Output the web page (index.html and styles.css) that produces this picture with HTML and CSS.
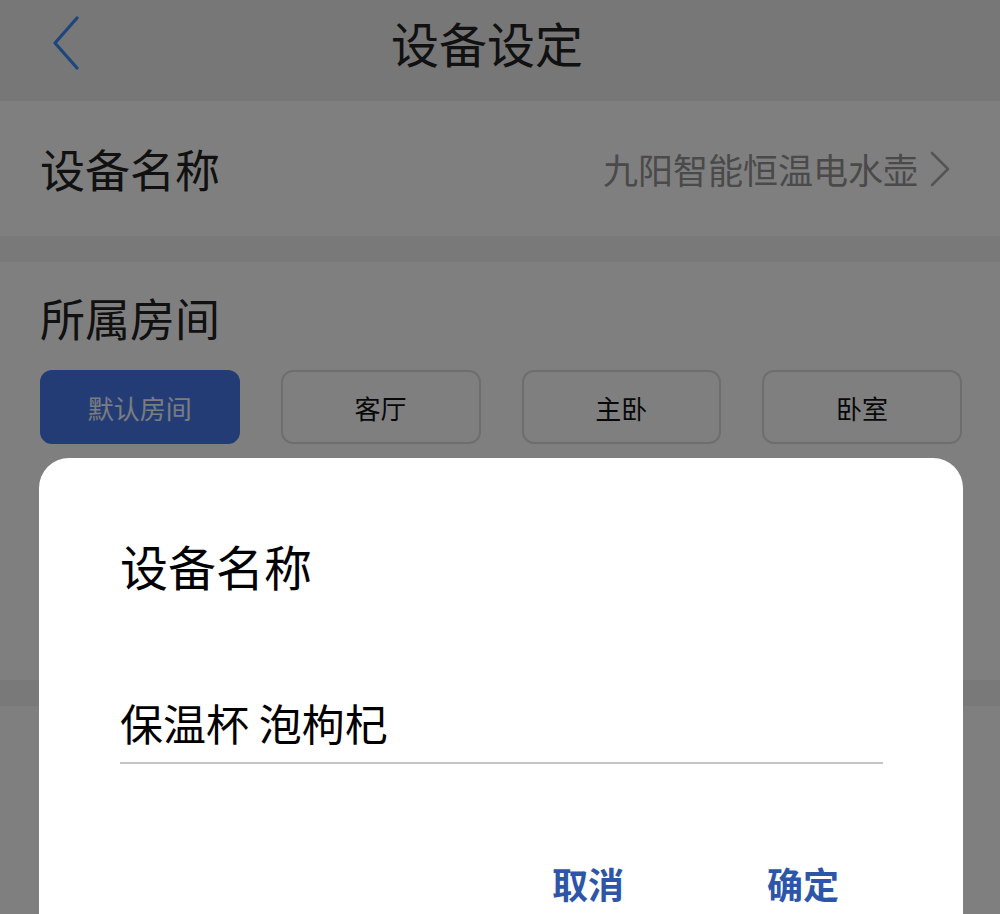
FILE: index.html
```html
<!DOCTYPE html>
<html lang="zh-CN">
<head>
<meta charset="utf-8">
<title>设备设定</title>
<link rel="stylesheet" href="styles.css">
</head>
<body>
<div class="page">
  <header class="topbar">
    <button class="back" aria-label="返回">
      <svg width="30" height="54" viewBox="0 0 30 54"><path d="M26 2 L4 27 L26 52" fill="none" stroke="#3a8cff" stroke-width="3.2" stroke-linecap="round" stroke-linejoin="round"/></svg>
    </button>
    <h1 class="title">设备设定</h1>
  </header>

  <section class="row">
    <span class="row-label">设备名称</span>
    <span class="row-value">九阳智能恒温电水壶
      <svg class="chev" width="24" height="36" viewBox="0 0 24 36"><path d="M4 2 L20 18 L4 34" fill="none" stroke="#aaaaaa" stroke-width="2.6" stroke-linecap="round" stroke-linejoin="round"/></svg>
    </span>
  </section>

  <div class="band"></div>

  <section class="rooms">
    <h2 class="rooms-title">所属房间</h2>
    <div class="chips">
      <div class="chip chip-active">默认房间</div>
      <div class="chip">客厅</div>
      <div class="chip">主卧</div>
      <div class="chip">卧室</div>
    </div>
  </section>

  <div class="band"></div>
  <section class="row row-fill"></section>
</div>

<div class="overlay"></div>

<div class="dialog" role="dialog">
  <div class="dialog-title">设备名称</div>
  <div class="dialog-input">保温杯 泡枸杞</div>
  <div class="dialog-actions">
    <span class="btn">取消</span>
    <span class="btn">确定</span>
  </div>
</div>
</body>
</html>
```

FILE: styles.css
```css
* { box-sizing: border-box; margin: 0; padding: 0; }
html, body {
  width: 1000px;
  height: 914px;
  overflow: hidden;
}
body {
  font-family: "Noto Sans CJK SC", "Noto Sans", sans-serif;
  background: #f2f2f2;
  color: #222;
}
.page {
  display: flex;
  flex-direction: column;
  height: 914px;
}

.topbar {
  height: 101px;
  flex: none;
  background: #eeeeee;
  display: flex;
  align-items: center;
  justify-content: center;
  position: relative;
}
.back {
  position: absolute;
  left: 51px;
  top: 16px;
  border: 0;
  background: none;
  display: flex;
}
.title {
  font-size: 48px;
  font-weight: 400;
  line-height: 1;
  color: #222;
  margin-left: -26px;
  margin-top: -18px;
}

.row {
  height: 135px;
  flex: none;
  background: #ffffff;
  display: flex;
  align-items: center;
  justify-content: space-between;
  padding: 0 48px 0 40px;
}
.row-fill { flex: 1; }
.row-label {
  font-size: 45px;
  line-height: 1;
  color: #222;
}
.row-value {
  font-size: 35px;
  line-height: 1;
  color: #949494;
  display: flex;
  align-items: center;
  gap: 10px;
}
.chev { display: block; }

.band { height: 26px; flex: none; background: #f2f2f2; }

.rooms {
  height: 418px;
  flex: none;
  background: #ffffff;
  padding: 28px 38px 0 40px;
}
.rooms-title {
  font-size: 45px;
  font-weight: 400;
  line-height: 56px;
  color: #222;
}
.chips {
  margin-top: 24px;
  display: grid;
  grid-template-columns: repeat(4, 1fr);
  gap: 41px;
}
.chip {
  height: 74px;
  border: 2px solid #dcdcdc;
  border-radius: 12px;
  display: flex;
  align-items: center;
  justify-content: center;
  font-size: 26px;
  color: #111;
}
.chip-active {
  background: #4678ec;
  border-color: #4678ec;
  color: #f4f8ff;
}

.overlay {
  position: fixed;
  inset: 0;
  background: rgba(0, 0, 0, 0.5);
}

.dialog {
  position: absolute;
  left: 39px;
  top: 458px;
  width: 924px;
  height: 456px;
  background: #ffffff;
  border-radius: 30px 30px 0 0;
  padding: 83px 80px 0 81px;
}
.dialog-title {
  font-size: 48px;
  line-height: 48px;
  color: #000;
}
.dialog-input {
  margin-top: 111px;
  font-size: 43px;
  line-height: 44px;
  color: #000;
  padding-bottom: 18px;
  border-bottom: 2px solid #c4c4c4;
}
.dialog-actions {
  margin-top: 101px;
  display: flex;
  justify-content: flex-end;
  gap: 143px;
  padding-right: 44px;
}
.btn {
  font-size: 36px;
  line-height: 36px;
  font-weight: 700;
  color: #2d56a8;
}
```
